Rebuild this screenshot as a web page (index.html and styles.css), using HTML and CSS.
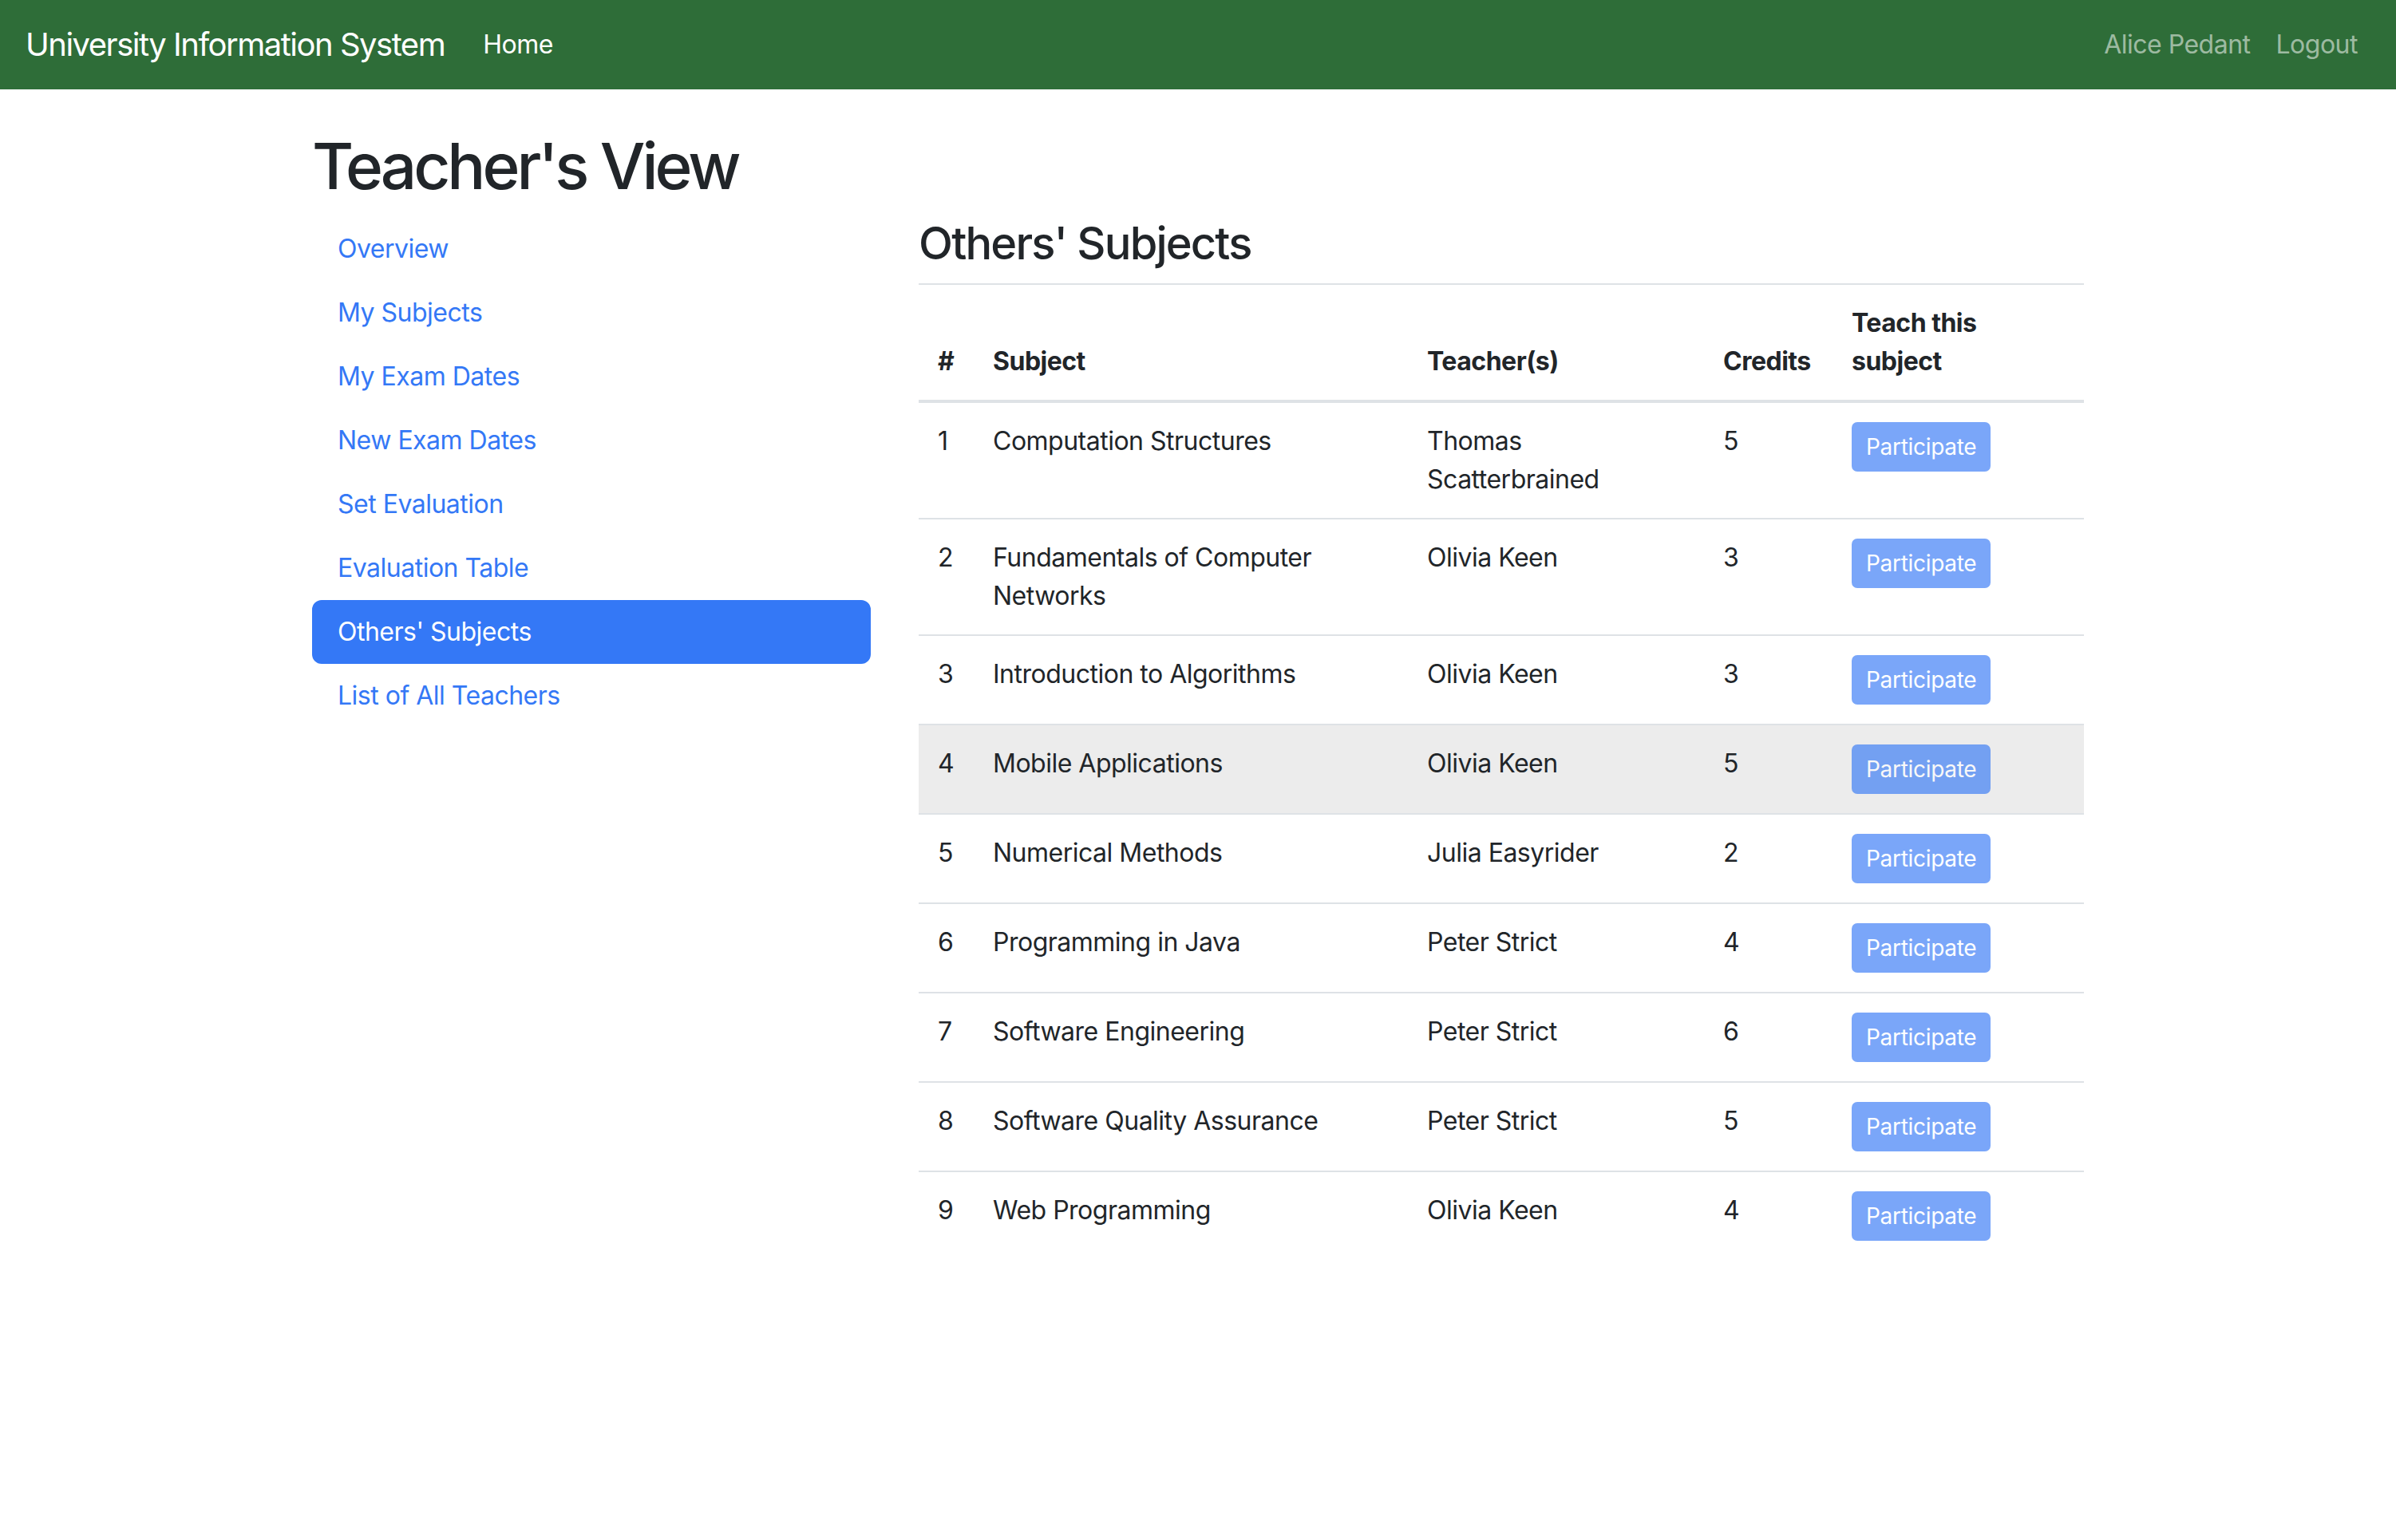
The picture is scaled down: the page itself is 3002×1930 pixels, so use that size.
FILE: index.html
```html
<!DOCTYPE html>
<html lang="en">
<head>
<meta charset="utf-8">
<title>Teacher's View</title>
<link rel="stylesheet" href="styles.css">
</head>
<body>
<nav class="navbar">
  <a class="brand" href="#">University Information System</a>
  <ul class="nav-list">
    <li><a class="nav-item nav-item-active" href="#">Home</a></li>
  </ul>
  <ul class="nav-list nav-right">
    <li><a class="nav-item" href="#">Alice Pedant</a></li>
    <li><a class="nav-item" href="#">Logout</a></li>
  </ul>
</nav>
<div class="container">
  <h1 class="page-title">Teacher's View</h1>
  <div class="row">
    <aside class="side-col">
      <ul class="pills">
        <li><a class="pill" href="#">Overview</a></li>
        <li><a class="pill" href="#">My Subjects</a></li>
        <li><a class="pill" href="#">My Exam Dates</a></li>
        <li><a class="pill" href="#">New Exam Dates</a></li>
        <li><a class="pill" href="#">Set Evaluation</a></li>
        <li><a class="pill" href="#">Evaluation Table</a></li>
        <li><a class="pill pill-active" href="#">Others' Subjects</a></li>
        <li><a class="pill" href="#">List of All Teachers</a></li>
      </ul>
    </aside>
    <main class="main-col">
      <h3 class="section-title">Others' Subjects</h3>
      <table class="table">
        <colgroup>
          <col class="c-num"><col class="c-subj"><col class="c-teach"><col class="c-cred"><col class="c-act">
        </colgroup>
        <thead>
          <tr><th>#</th><th>Subject</th><th>Teacher(s)</th><th>Credits</th><th>Teach this subject</th></tr>
        </thead>
        <tbody>
          <tr><td>1</td><td>Computation Structures</td><td>Thomas Scatterbrained</td><td>5</td><td><button class="btn" disabled>Participate</button></td></tr>
          <tr><td>2</td><td>Fundamentals of Computer Networks</td><td>Olivia Keen</td><td>3</td><td><button class="btn" disabled>Participate</button></td></tr>
          <tr><td>3</td><td>Introduction to Algorithms</td><td>Olivia Keen</td><td>3</td><td><button class="btn" disabled>Participate</button></td></tr>
          <tr class="row-hover"><td>4</td><td>Mobile Applications</td><td>Olivia Keen</td><td>5</td><td><button class="btn" disabled>Participate</button></td></tr>
          <tr><td>5</td><td>Numerical Methods</td><td>Julia Easyrider</td><td>2</td><td><button class="btn" disabled>Participate</button></td></tr>
          <tr><td>6</td><td>Programming in Java</td><td>Peter Strict</td><td>4</td><td><button class="btn" disabled>Participate</button></td></tr>
          <tr><td>7</td><td>Software Engineering</td><td>Peter Strict</td><td>6</td><td><button class="btn" disabled>Participate</button></td></tr>
          <tr><td>8</td><td>Software Quality Assurance</td><td>Peter Strict</td><td>5</td><td><button class="btn" disabled>Participate</button></td></tr>
          <tr><td>9</td><td>Web Programming</td><td>Olivia Keen</td><td>4</td><td><button class="btn" disabled>Participate</button></td></tr>
        </tbody>
      </table>
    </main>
  </div>
</div>
</body>
</html>
```
FILE: styles.css
```css
* { box-sizing: border-box; }
html, body { margin: 0; padding: 0; }
body {
  font-family: Inter, "Noto Sans", "Liberation Sans", sans-serif;
  font-size: 32px;
  line-height: 1.5;
  letter-spacing: -0.5px;
  color: #212529;
  background: #fff;
}
a { text-decoration: none; }
ul { list-style: none; margin: 0; padding: 0; }

.navbar {
  display: flex;
  align-items: center;
  height: 112px;
  padding: 16px 32px;
  background: #2e6d38;
}
.brand {
  color: #fff;
  font-size: 40px;
  line-height: 60px;
  letter-spacing: -1.5px;
  padding: 10px 0;
  margin-right: 32px;
}
.nav-list { display: flex; }
.nav-right { margin-left: auto; }
.nav-item {
  display: block;
  padding: 16px;
  color: rgba(255,255,255,.55);
  line-height: 48px;
}
.nav-item-active { color: #fff; }

.container {
  width: 2280px;
  margin: 48px auto 0;
  padding: 0 30px;
}
.page-title {
  font-size: 80px;
  font-weight: 500;
  line-height: 1.2;
  letter-spacing: -4px;
  margin: 0 0 16px;
}
.row { display: flex; gap: 60px; }
.side-col { width: 700px; flex: none; }
.main-col { flex: 1; min-width: 0; }

.pill {
  display: block;
  padding: 16px 32px;
  color: #3478f6;
  line-height: 48px;
  border-radius: 12px;
}
.pill-active { background: #3478f6; color: #fff; }

.section-title {
  font-size: 56px;
  font-weight: 500;
  line-height: 1.2;
  letter-spacing: -1.8px;
  margin: 0 0 16px;
}

.table {
  width: 100%;
  border-collapse: collapse;
  table-layout: fixed;
}
.c-num { width: 69px; }
.c-subj { width: 544px; }
.c-teach { width: 371px; }
.c-cred { width: 161px; }
.c-act { width: 315px; }
.table th, .table td {
  padding: 24px;
  text-align: left;
  vertical-align: top;
  border-top: 2px solid #dee2e6;
}
.table th {
  vertical-align: bottom;
  font-weight: 700;
  border-bottom: 4px solid #dee2e6;
}
.row-hover td { background: #ececec; }

.btn {
  font-family: inherit;
  font-size: 28px;
  line-height: 42px;
  letter-spacing: -0.3px;
  padding: 8px 16px;
  border: 2px solid #3478f6;
  background: #3478f6;
  color: #fff;
  border-radius: 7px;
  opacity: .65;
}
```
